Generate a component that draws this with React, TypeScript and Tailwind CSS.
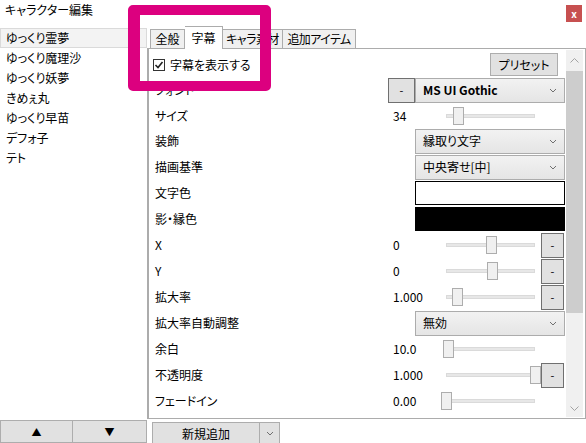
import React from 'react';

const Chevron = () => (
  <svg width="8" height="5" viewBox="0 0 8 5" className="shrink-0">
    <path d="M1 1 L4 4 L7 1" fill="none" stroke="#707070" strokeWidth="1" />
  </svg>
);

const Combo: React.FC<{ text: string; bold?: boolean }> = ({ text, bold }) => (
  <div className="w-[150px] h-[25px] flex items-center justify-between pl-[7px] pr-[7px] border border-[#acacac] bg-gradient-to-b from-[#f2f2f2] to-[#e5e5e5]">
    <span className={bold ? 'font-bold' : ''}>{text}</span>
    <Chevron />
  </div>
);

const Slider: React.FC<{ pos: number }> = ({ pos }) => (
  <div className="relative w-[89px] h-[18px]">
    <div className="absolute left-0 right-0 top-[7px] h-[4px] bg-[#e7e7e7] border border-[#dadada]" />
    <div className="absolute top-0 w-[11px] h-[18px] bg-[#f0f0f0] border border-[#adadad]" style={{ left: pos }} />
  </div>
);

const MinusBtn: React.FC<{ w?: string }> = ({ w = 'w-[23px]' }) => (
  <div className={`${w} h-[25px] flex items-center justify-center bg-[#e1e1e1] border border-[#707070] text-[11px]`}>-</div>
);

const SliderRow: React.FC<{ label: string; value: string; pos: number; btn?: boolean; h?: string }> = ({ label, value, pos, btn, h = 'h-[26px]' }) => (
  <div className={`flex items-center ${h}`}>
    <div className="w-[244px] pl-[6px]">{label}</div>
    <div className="w-[53px]">{value}</div>
    <Slider pos={pos} />
    <div className="w-[6px]" />
    {btn && <MinusBtn />}
  </div>
);

const ComboRow: React.FC<{ label: string; text: string }> = ({ label, text }) => (
  <div className="flex items-center h-[26px]">
    <div className="w-[266px] pl-[6px]">{label}</div>
    <Combo text={text} />
  </div>
);

const ColorRow: React.FC<{ label: string; color: string }> = ({ label, color }) => (
  <div className="flex items-center h-[26px]">
    <div className="w-[266px] pl-[6px]">{label}</div>
    <div className={`w-[150px] h-[24px] border border-black ${color}`} />
  </div>
);

const characters = ['ゆっくり霊夢', 'ゆっくり魔理沙', 'ゆっくり妖夢', 'きめぇ丸', 'ゆっくり早苗', 'デフォ子', 'テト'];

export default function App() {
  return (
    <div className="relative w-[586px] h-[443px] bg-white text-black text-[12px] leading-[16px] overflow-hidden [font-family:'Noto_Sans_CJK_JP',sans-serif] [font-feature-settings:'palt']">
      {/* title bar */}
      <div className="h-[26px] flex justify-between">
        <div className="pl-[5px] pt-[2px]">キャラクター編集</div>
        <div className="mt-[5px] mr-[4px] w-[16px] h-[17px] bg-[#c75050] text-white text-[10px] font-bold flex items-center justify-center">x</div>
      </div>

      <div className="flex h-[417px]">
        {/* left list */}
        <div className="w-[147px] flex flex-col">
          <div className="flex-1 pt-[2px]">
            {characters.map((c, i) => (
              <div
                key={c}
                className={`h-[20px] leading-[18px] pl-[5px] border ${i === 0 ? 'bg-[#f3f3f3] border-[#dadada]' : 'border-transparent'}`}
              >
                {c}
              </div>
            ))}
          </div>
          <div className="flex h-[23px]">
            <div className="w-[73px] flex items-center justify-center bg-[#e1e1e1] border border-[#adadad] text-[10px]">▲</div>
            <div className="w-[74px] flex items-center justify-center bg-[#e1e1e1] border border-l-0 border-[#adadad] text-[10px]">▼</div>
          </div>
        </div>

        {/* right side */}
        <div className="w-[439px] flex flex-col">
          <div className="h-[22px] flex items-end pl-[3px]">
            <div className="w-[35px] h-[19px] flex items-center justify-center bg-[#f0f0f0] border border-b-0 border-[#acacac]">全般</div>
            <div className="relative z-10 w-[38px] h-[23px] -mb-[1px] flex items-center justify-center bg-white border border-l-0 border-b-0 border-[#acacac]">字幕</div>
            <div className="w-[60px] h-[19px] flex items-center justify-center bg-[#f0f0f0] border border-l-0 border-b-0 border-[#acacac] tracking-[-0.6px] whitespace-nowrap">キャラ素材</div>
            <div className="w-[73px] h-[19px] flex items-center justify-center bg-[#f0f0f0] border border-l-0 border-b-0 border-[#acacac] tracking-[-0.6px] whitespace-nowrap">追加アイテム</div>
          </div>

          <div className="h-[371px] flex border-t border-b border-r border-l-2 border-[#acacac]">
            <div className="w-[416px] pt-[4px]">
              <div className="h-[23px] mb-[1px] flex items-center justify-between pr-[7px]">
                <div className="flex items-center pl-[4px] gap-[5px]">
                  <div className="w-[12px] h-[12px] border border-[#333] bg-white flex items-center justify-center">
                    <svg width="10" height="10" viewBox="0 0 10 10">
                      <path d="M1.5 5 L4 7.5 L8.5 2" fill="none" stroke="#222" strokeWidth="1.6" />
                    </svg>
                  </div>
                  <span>字幕を表示する</span>
                </div>
                <div className="w-[68px] h-[23px] flex items-center justify-center bg-[#e1e1e1] border border-[#adadad]">プリセット</div>
              </div>

              <div className="flex items-center h-[26px]">
                <div className="w-[239px] pl-[6px]">フォント</div>
                <MinusBtn w="w-[27px]" />
                <Combo text="MS UI Gothic" bold />
              </div>
              <SliderRow label="サイズ" value="34" pos={7} h="h-[25px]" />
              <ComboRow label="装飾" text="縁取り文字" />
              <ComboRow label="描画基準" text="中央寄せ[中]" />
              <ColorRow label="文字色" color="bg-white" />
              <ColorRow label="影・縁色" color="bg-black" />
              <SliderRow label="X" value="0" pos={40} btn />
              <SliderRow label="Y" value="0" pos={41} btn />
              <SliderRow label="拡大率" value="1.000" pos={6} btn />
              <ComboRow label="拡大率自動調整" text="無効" />
              <SliderRow label="余白" value="10.0" pos={-3} />
              <SliderRow label="不透明度" value="1.000" pos={84} btn />
              <SliderRow label="フェードイン" value="0.00" pos={-5} />
            </div>

            {/* scrollbar */}
            <div className="ml-[1px] w-[17px] my-[1px] flex flex-col bg-[#f0f0f0]">
              <div className="h-[21px] flex items-center justify-center">
                <svg width="9" height="5" viewBox="0 0 9 5">
                  <path d="M0.5 4.5 L4.5 0.5 L8.5 4.5" fill="none" stroke="#a3a3a3" strokeWidth="1" />
                </svg>
              </div>
              <div className="h-[242px] bg-[#cdcdcd]" />
              <div className="flex-1" />
              <div className="h-[17px] flex items-center justify-center">
                <svg width="9" height="5" viewBox="0 0 9 5">
                  <path d="M0.5 0.5 L4.5 4.5 L8.5 0.5" fill="none" stroke="#a3a3a3" strokeWidth="1" />
                </svg>
              </div>
            </div>
          </div>

          <div className="flex pt-[3px] pl-[5px] h-[24px]">
            <div className="w-[108px] h-[23px] flex items-center justify-center bg-[#e1e1e1] border border-[#adadad]">新規追加</div>
            <div className="w-[20px] h-[23px] flex items-center justify-center bg-[#e1e1e1] border border-l-0 border-[#adadad]">
              <Chevron />
            </div>
          </div>
        </div>
      </div>

      {/* highlight marker */}
      <div className="absolute left-[128px] top-[5px] w-[143px] h-[86px] border-t-[10px] border-b-[10px] border-l-[12px] border-r-[11px] border-[#dc007f] rounded-[5px]" />
    </div>
  );
}
